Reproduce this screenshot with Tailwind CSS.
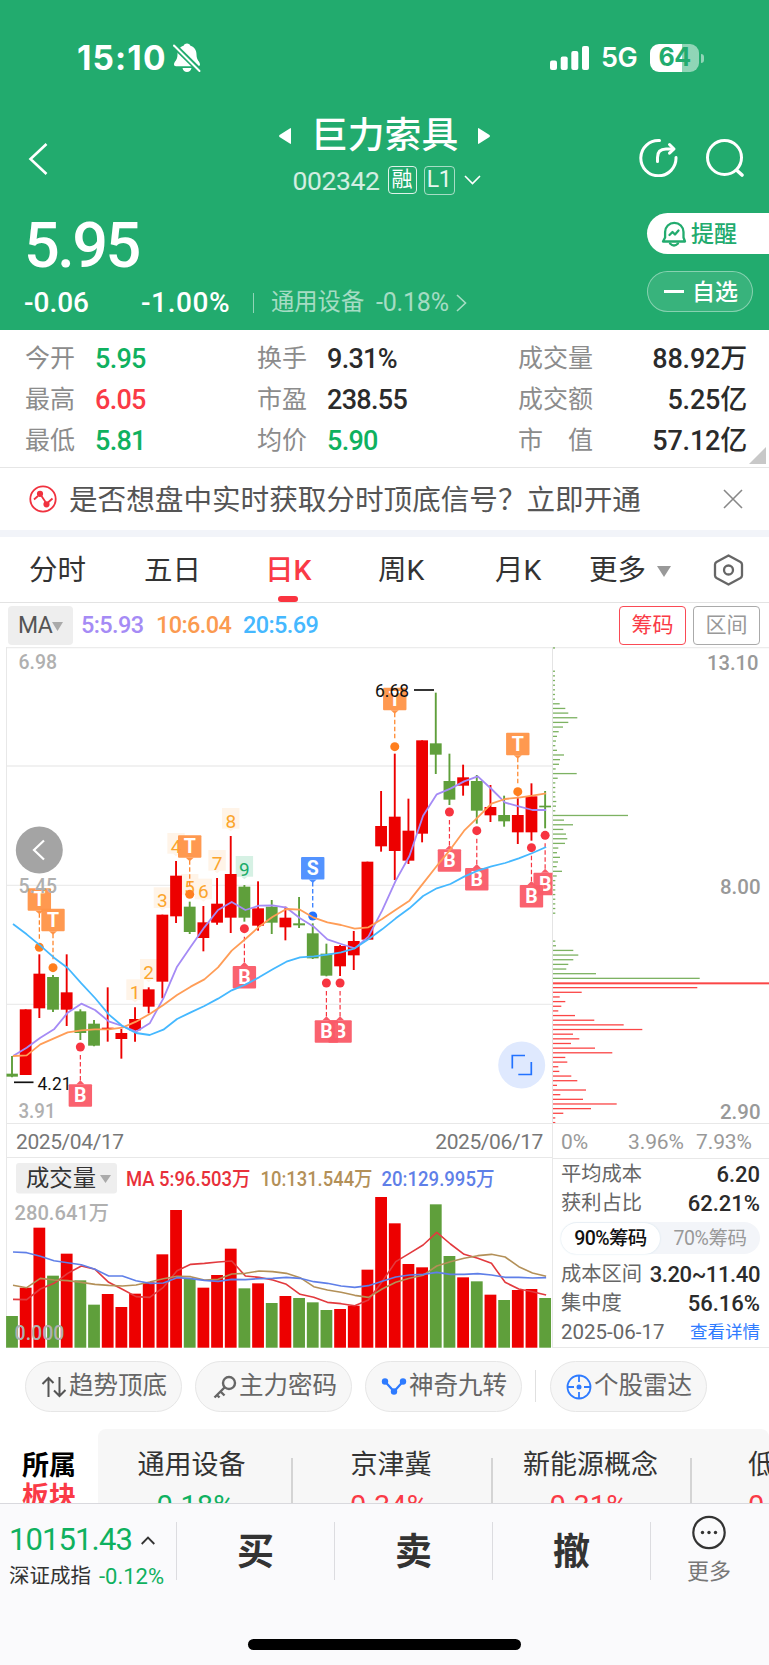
<!DOCTYPE html>
<html lang="zh-CN">
  <head>
    <meta charset="UTF-8" />
    <meta name="viewport" content="width=device-width, initial-scale=1.0" />
    <title>巨力索具 002342</title>
    <script src="https://cdn.jsdelivr.net/npm/@tailwindcss/browser@4"></script>
  </head>
  <body class="bg-white font-['Roboto','Noto_Sans_CJK_SC',sans-serif] text-[#333]">
    <div class="flex h-[1665px] w-[769px] flex-col overflow-hidden whitespace-nowrap">
      <!-- Header -->
      <header class="h-[330px] shrink-0 bg-[#22ab6e] text-white">
        <div class="flex h-[114px] items-center pl-[77px] pr-[65px] pt-0.5 font-['Inter',sans-serif]">
          <span class="w-[91px] text-[33.500px] font-bold tracking-[1.100px]">15:10</span>
          <svg class="ml-1" width="30" height="32" viewBox="0 0 30 32" fill="#fff">
            <path d="M15 1.500c-1.800 0-3 1-3.400 2.200C7.500 5 5.500 8.300 5.500 12.500c0 6-3.500 7-3.500 10 0 1 .8 1.700 2 1.700h22c1.200 0 2-.7 2-1.700 0-3-3.500-4-3.500-10 0-4.200-2-7.500-6.100-8.800C18 2.500 16.800 1.500 15 1.500zM10.500 26h9c-.5 2.500-2.300 4-4.500 4s-4-1.500-4.500-4z" />
            <path d="M1.500 3l26.500 26" stroke="#22ab6e" stroke-width="5.500" />
            <path d="M2 3.500l25.500 25.500" stroke="#fff" stroke-width="2" stroke-linecap="round" />
          </svg>
          <svg class="ml-auto" width="39" height="26" viewBox="0 0 39 26" fill="#fff">
            <rect x="0" y="15.500" width="7" height="9.500" rx="2" />
            <rect x="10.700" y="11.500" width="7" height="13.500" rx="2" />
            <rect x="21.300" y="6" width="7" height="19" rx="2" />
            <rect x="32" y="1" width="7" height="24" rx="2" />
          </svg>
          <span class="ml-[12px] w-[38px] text-[27px] font-semibold tracking-[-0.6px]">5G</span>
          <div class="ml-[11px] flex h-[28px] w-[49px] items-center justify-center rounded-[9px] bg-linear-to-r from-white from-65% to-white/50 to-65% text-[25px] font-bold tracking-[-0.5px] text-[#22ab6e]">64</div>
          <div class="ml-[2px] h-[9px] w-[3px] rounded-r-full bg-white/50"></div>
        </div>

        <div class="grid h-[92px] grid-cols-[1fr_auto_1fr]">
          <div class="pl-[27px] pt-[28px]">
            <svg width="22" height="34" viewBox="0 0 22 34" fill="none" stroke="#fff" stroke-width="2.600"><path d="M19.500 2L3.500 17l16 15" /></svg>
          </div>
          <div class="flex flex-col items-center pt-px">
            <div class="flex h-[42px] items-center gap-[19px]">
              <svg width="14" height="18" viewBox="0 0 14 18" fill="#fff"><path d="M13 2v14q0 1.500-1.200.600L1.500 10q-1-1 0-2L11.800 1.400Q13 .5 13 2z" /></svg>
              <h1 class="w-[147px] text-[36.800px] font-medium leading-[42px]">巨力索具</h1>
              <svg width="14" height="18" viewBox="0 0 14 18" fill="#fff"><path d="M1 2v14q0 1.500 1.200.600L12.500 10q1-1 0-2L2.200 1.400Q1 .5 1 2z" /></svg>
            </div>
            <div class="mt-[7px] flex h-[32px] items-center pl-[4px]">
              <span class="w-[95px] pt-0.5 text-[26.500px] tracking-[-0.4px] text-white/80">002342</span>
              <span class="flex h-[28px] w-[29px] items-center justify-center rounded-[4px] border border-white/85 text-[21px]">融</span>
              <span class="ml-[7px] flex h-[29px] w-[31px] items-center justify-center rounded-[4px] border border-white/60 text-[23px] tracking-[-0.5px] text-white/90">L1</span>
              <svg class="ml-[9px]" width="17" height="10" viewBox="0 0 17 10" fill="none" stroke="#fff" stroke-width="1.600"><path d="M1 1l7.500 7.500L16 1" /></svg>
            </div>
          </div>
          <div class="flex items-start justify-end gap-[27px] pr-[24px] pt-[23px]">
            <svg width="40" height="40" viewBox="0 0 40 40" fill="none" stroke="#fff" stroke-width="3" stroke-linecap="round" stroke-linejoin="round">
              <path d="M21.500 3.600A17.600 17.600 0 1 0 38 20.500" />
              <path d="M19.500 24.500v-4q0-8.500 8.500-8.500h7" />
              <path d="M31.500 7.500l4.500 4.500-4.500 4.200" />
            </svg>
            <svg width="40" height="40" viewBox="0 0 40 40" fill="none" stroke="#fff" stroke-width="3" stroke-linecap="round">
              <circle cx="19.500" cy="20.500" r="17" />
              <path d="M32 33.500l5 4.500" stroke-width="3.600" />
            </svg>
          </div>
        </div>

        <div class="flex h-[124px] justify-between">
          <div class="pl-[24px]">
            <div class="h-[74px] pt-[7px] text-[63px] font-medium leading-[66px] tracking-[-2.500px]">5.95</div>
            <div class="flex h-[40px] items-center pt-[5px] text-[28px] font-medium">
              <span class="w-[117px]">-0.06</span>
              <span class="w-[112px] tracking-[0.6px]">-1.00%</span>
              <span class="h-[20px] w-px bg-white/50"></span>
              <span class="ml-[17px] w-[105px] text-[23.300px] font-normal text-white/60">通用设备</span>
              <span class="w-[80px] text-[25px] font-normal tracking-[-0.2px] text-white/60">-0.18%</span>
              <svg width="11" height="18" viewBox="0 0 11 18" fill="none" stroke="#fff" stroke-opacity=".6" stroke-width="1.600"><path d="M1 1l8.500 8L1 17" /></svg>
            </div>
          </div>
          <div class="flex flex-col gap-[17px] pt-[7px] text-[23px]">
            <div class="flex h-[41px] w-[122px] items-center rounded-l-full bg-white pl-[14px] font-medium text-[#22ab6e]">
              <svg width="26" height="28" viewBox="0 0 26 28" fill="none" stroke="#22ab6e" stroke-width="2.300" stroke-linejoin="round" stroke-linecap="round">
                <path d="M2 21.500h22l-1.500-4V12a9.200 9.200 0 0 0-18.400 0v5.500z" />
                <path d="M8.500 15l3-3 2.500 2.500 3.500-4" />
                <path d="M9 23.500q4 4 8 0" />
              </svg>
              <span class="ml-[4px] pt-[3px]">提醒</span>
            </div>
            <div class="flex h-[41px] w-[106px] items-center rounded-full border border-white/40 bg-white/10 pl-[16px] font-medium">
              <span class="h-[2.500px] w-[20px] bg-white"></span>
              <span class="ml-[8px] pt-[3px]">自选</span>
            </div>
          </div>
        </div>
      </header>

      <!-- Quote summary -->
      <section class="relative h-[138px] shrink-0 border-b border-[#e6e6e6] pt-[8px] text-[27px] font-medium tracking-[-0.7px] text-[#2b2b2b]">
        <div class="grid h-[123px] grid-cols-[70px_162px_70px_191px_1fr] grid-rows-3 items-center pl-[25px] pr-[22px] [&>b]:text-[25px] [&>b]:font-normal [&>b]:tracking-normal [&>b]:text-[#8c8c8c] [&>span]:pt-0.5">
          <b>今开</b><span class="text-[#0fb15f]">5.95</span>
          <b>换手</b><span>9.31%</span>
          <div class="flex items-center justify-between"><span class="text-[25px] font-normal tracking-normal text-[#8c8c8c]">成交量</span><span class="pt-0.5 tracking-[-0.2px]">88.92万</span></div>
          <b>最高</b><span class="text-[#fa3a46]">6.05</span>
          <b>市盈</b><span>238.55</span>
          <div class="flex items-center justify-between"><span class="text-[25px] font-normal tracking-normal text-[#8c8c8c]">成交额</span><span class="pt-0.5 tracking-[-0.2px]">5.25亿</span></div>
          <b>最低</b><span class="text-[#0fb15f]">5.81</span>
          <b>均价</b><span class="text-[#0fb15f]">5.90</span>
          <div class="flex items-center justify-between"><span class="flex w-[75px] justify-between text-[25px] font-normal tracking-normal text-[#8c8c8c]"><i class="not-italic">市</i><i class="not-italic">值</i></span><span class="pt-0.5 tracking-[-0.2px]">57.12亿</span></div>
        </div>
        <svg class="absolute bottom-[3px] right-[3px]" width="17" height="17" fill="#c8c8c8"><path d="M17 0v17H0z" /></svg>
      </section>

      <!-- Notice -->
      <section class="flex h-[62px] shrink-0 items-center pl-[28px] pr-[26px] text-[#555]">
        <svg width="30" height="30" viewBox="0 0 30 30" fill="none" stroke="#f0323f" stroke-width="1.800">
          <circle cx="15" cy="15" r="12.700" />
          <path d="M6 15.500l4-3.500M13.500 12l4 6M20 18.500l4.500-4" />
          <circle cx="12" cy="9.800" r="2.200" fill="#f0323f" />
          <circle cx="18.500" cy="20.300" r="2.200" fill="#f0323f" />
        </svg>
        <span class="ml-[11px] pt-[3px] text-[28.600px]">是否想盘中实时获取分时顶底信号？立即开通</span>
        <svg class="ml-auto" width="20" height="20" viewBox="0 0 20 20" stroke="#888" stroke-width="1.600"><path d="M1 1l18 18M19 1L1 19" /></svg>
      </section>
      <div class="h-[7px] shrink-0 bg-[#f2f4f9]"></div>

      <!-- Period tabs -->
      <nav class="grid h-[66px] shrink-0 grid-cols-[115px_121px_113px_117px_94px_124px_1fr] items-center border-b border-[#e3e3e3] pl-[29px] text-[28.500px] [&>span]:pt-[4px]">
        <span>分时</span>
        <span>五日</span>
        <span class="relative flex h-full items-center font-medium text-[#fa3a46]">日K<i class="absolute bottom-0 left-[13px] h-[6px] w-[20px] rounded-[3px] bg-[#fa3440]"></i></span>
        <span>周K</span>
        <span>月K</span>
        <span class="flex items-center">更多<svg class="ml-[11px]" width="14" height="11" fill="#999"><path d="M0 0h14l-7 11z" /></svg></span>
        <svg width="31" height="34" viewBox="0 0 31 34" fill="none" stroke="#666" stroke-width="2.300" stroke-linejoin="round">
          <path d="M15.500 2.500l12 6.500q1.500 1 1.500 2.500v11q0 1.500-1.500 2.500l-12 6.500-12-6.500Q2 24 2 22.500v-11Q2 10 3.500 9z" />
          <circle cx="15.500" cy="17" r="4.500" />
        </svg>
      </nav>

      <!-- Moving averages -->
      <section class="flex h-[44px] shrink-0 items-center pl-[8px] pr-[9px] text-[23.500px] font-medium tracking-[-0.6px]">
        <span class="flex h-[39px] w-[65px] items-center justify-center rounded-[4px] bg-[#eee] pt-0.5 text-[23px] font-normal text-[#555]">MA<svg width="11" height="9" fill="#aaa"><path d="M0 0h11L5.500 9z" /></svg></span>
        <span class="ml-[8px] w-[75px] pt-0.5 text-[#a58bf5]">5:5.93</span>
        <span class="w-[87px] pt-0.5 text-[#fb9a50]">10:6.04</span>
        <span class="pt-0.5 text-[#45b8ff]">20:5.69</span>
        <span class="ml-auto flex h-[39px] w-[67px] items-center justify-center rounded-[4px] border border-[#fa4a55] pt-px text-[21px] font-normal tracking-normal text-[#fa3a46]">筹码</span>
        <span class="ml-[7px] flex h-[39px] w-[67px] items-center justify-center rounded-[4px] border border-[#aaa] pt-px text-[21px] font-normal tracking-normal text-[#999]">区间</span>
      </section>

      <!-- Candles and chip distribution -->
      <svg id="price" class="block h-[476px] w-[769px] shrink-0" viewBox="0 647 769 476" font-size="20.500"></svg>

      <div class="flex h-[225px] shrink-0">
        <div class="w-[553px] border-r border-[#e8e8e8]">
          <div class="ml-[6px] flex h-[35px] items-center justify-between border-y border-l border-[#e8e8e8] pl-[9px] pr-[9px] pt-[5px] text-[21px] tracking-[-0.4px] text-[#777]">
            <span>2025/04/17</span><span>2025/06/17</span>
          </div>
          <svg id="volume" class="block h-[190px] w-[552px]" viewBox="0 1158 552 190" font-size="20"></svg>
        </div>

        <!-- Chip stats -->
        <div class="w-[216px] border-b border-[#e8e8e8] text-[#666]">
          <div class="flex h-[36px] items-center border-y border-[#e8e8e8] pl-[8px] pt-1 text-[21px] tracking-[-0.1px] text-[#999]">
            <span class="w-[67px]">0%</span><span class="w-[68px]">3.96%</span><span>7.93%</span>
          </div>
          <div class="flex flex-col pl-[8px] pr-[9px] text-[20.300px] [&_b]:text-[22px] [&_b]:font-medium [&_b]:text-[#2b2b2b]">
            <div class="flex h-[29px] items-center justify-between pt-0.5"><span>平均成本</span><b>6.20</b></div>
            <div class="flex h-[29px] items-center justify-between pt-0.5"><span>获利占比</span><b>62.21%</b></div>
            <div class="my-[5px] flex h-[32px] items-center rounded-full bg-[#f3f5f9] text-[19.500px]">
              <span class="flex h-[31px] w-[99px] items-center justify-center rounded-full bg-white pt-0.5 font-medium tracking-[-0.6px] text-[#111] shadow-[0_0_2px_#cfe0ea]">90%筹码</span>
              <span class="flex-1 pt-0.5 text-center tracking-[-0.4px] text-[#999]">70%筹码</span>
            </div>
            <div class="flex h-[29px] items-center justify-between pt-px"><span>成本区间</span><b class="tracking-[-0.4px]">3.20~11.40</b></div>
            <div class="flex h-[29px] items-center justify-between pt-px"><span>集中度</span><b>56.16%</b></div>
            <div class="flex h-[30px] items-center justify-between"><span class="text-[20.500px]">2025-06-17</span><span class="text-[17.500px] text-[#2e7bff]">查看详情</span></div>
          </div>
        </div>
      </div>

      <!-- Tools -->
      <section class="flex h-[81px] shrink-0 items-start pl-[25px] pt-[13px] text-[24.500px] text-[#666] [&>div]:flex [&>div]:h-[51px] [&>div]:w-[157px] [&>div]:items-center [&>div]:rounded-full [&>div]:border [&>div]:border-[#e6e6e6] [&>div]:bg-[#f7f7f7]">
        <div class="pl-[15px]">
          <svg class="mr-[2px]" width="26" height="24" viewBox="0 0 26 24" fill="none" stroke="#555" stroke-width="2"><path d="M7.500 22V3M1.500 9l6-6 5 5M18.500 2v19M13 15.500l5.500 5.500 6-6" /></svg>趋势顶底
        </div>
        <div class="ml-[13px] pl-[17px]">
          <svg class="mr-[2px]" width="24" height="24" viewBox="0 0 24 24" fill="none" stroke="#666" stroke-width="2.400"><circle cx="16" cy="8" r="6" /><path d="M11.500 12.500L1.500 22.500M7.500 16.500l4 4M3.500 19.500l3 3" /></svg>主力密码
        </div>
        <div class="ml-[13px] pl-[15px]">
          <svg class="mr-[2px]" width="26" height="24" viewBox="0 0 26 24" fill="#2e7bff"><path d="M4 6.500l9 10 9-10" fill="none" stroke="#2e7bff" stroke-width="2.200" /><circle cx="4" cy="6.500" r="3.200" /><circle cx="22" cy="6.500" r="3.200" /><circle cx="13" cy="16.500" r="3.200" /></svg>神奇九转
        </div>
        <span class="ml-[13px] mr-[14px] mt-[9px] h-[32px] w-px bg-[#e0e0e0]"></span>
        <div class="pl-[15px]">
          <svg class="mr-[2px]" width="26" height="26" viewBox="0 0 26 26" fill="none" stroke="#2e7bff" stroke-width="1.800"><circle cx="13" cy="13" r="11.500" /><path d="M13 2v6M13 18v6M2 13h6M18 13h6" /><circle cx="13" cy="13" r="2.500" fill="#2e7bff" stroke="none" /></svg>个股雷达
        </div>
      </section>

      <!-- Sectors -->
      <section class="flex h-[74px] shrink-0 overflow-hidden">
        <div class="w-[98px] shrink-0 pl-[22px] pt-[22px] text-[27px] font-bold leading-[31px] text-black">所属<br /><span class="text-[#fa3a46]">板块</span></div>
        <div class="flex h-[110px] w-[671px] shrink-0 overflow-hidden rounded-[8px] bg-[#f7f7f7] pt-[16px] text-center text-[27px] [&_p]:mt-px [&_p]:text-[29px] [&_p]:leading-[40px] [&_p]:text-[#fa3a46]">
          <div class="w-[193px] shrink-0 pr-[6px] leading-[40px]">通用设备<p class="text-[#0fb15f]!">-0.18%</p></div>
          <div class="mt-[13px] w-[2px] shrink-0 bg-[#d4d4d4]"></div>
          <div class="w-[198px] shrink-0 pr-[2px] leading-[40px]">京津冀<p class="-ml-[4px]">0.34%</p></div>
          <div class="mt-[13px] w-[2px] shrink-0 bg-[#d4d4d4]"></div>
          <div class="w-[197px] shrink-0 pr-[2px] leading-[40px]">新能源概念<p class="-ml-[4px]">0.31%</p></div>
          <div class="mt-[13px] w-[2px] shrink-0 bg-[#d4d4d4]"></div>
          <div class="w-[198px] shrink-0 pl-[56px] text-left leading-[40px]">低空经济<p>0.25%</p></div>
        </div>
      </section>

      <!-- Trade bar -->
      <footer class="flex h-[162px] shrink-0 flex-col border-t border-[#d9d9de] bg-[#fafafc]">
        <div class="flex h-[96px] [&>i]:mt-[18px] [&>i]:h-[58px] [&>i]:w-px [&>i]:bg-[#dcdce0]">
          <div class="w-[176px] pl-[9px] pt-[16px]">
            <div class="flex h-[40px] items-center pt-px text-[31px] tracking-[-0.9px] text-[#0fb15f]">10151.43<svg class="ml-[9px]" width="14" height="9" viewBox="0 0 14 9" fill="none" stroke="#333" stroke-width="1.800"><path d="M.7 8L7 1.500 13.300 8" /></svg></div>
            <div class="flex h-[32px] items-center text-[20.500px] text-[#333]">深证成指<span class="ml-[8px] text-[22px] text-[#0fb15f]">-0.12%</span></div>
          </div>
          <i></i>
          <div class="w-[157px] text-center text-[37px] font-bold leading-[97px]">买</div>
          <i></i>
          <div class="w-[157px] text-center text-[37px] font-bold leading-[97px]">卖</div>
          <i></i>
          <div class="w-[157px] text-center text-[37px] font-bold leading-[97px]">撤</div>
          <i></i>
          <div class="flex flex-1 flex-col items-center pr-[2px] pt-[11px] text-[22px] text-[#777]">
            <svg width="36" height="36" viewBox="0 0 36 36" fill="none" stroke="#333" stroke-width="2.200"><circle cx="18" cy="17.500" r="15.700" /><g fill="#333" stroke="none"><circle cx="11.500" cy="17.500" r="1.700" /><circle cx="18" cy="17.500" r="1.700" /><circle cx="24.500" cy="17.500" r="1.700" /></g></svg>
            <span class="mt-[4px]">更多</span>
          </div>
        </div>
        <div class="mx-auto mt-[39px] h-[11px] w-[273px] rounded-full bg-black"></div>
      </footer>
    </div>

    <script>
      const RED = "#ed0000";
      const GREEN = "#5f9f3b";
      const STEP = 13.67;
      const cx = (i) => 12 + i * STEP;

      // values are stored at @3x, offset from the top of each chart
      const py = (v) => 640 + v / 3;
      const vy = (v) => 1110 + v / 3;

      const rect = (x, y, w, h, fill, extra = "") => `<rect x="${x}" y="${y}" width="${w}" height="${h}" fill="${fill}" ${extra}/>`;
      const line = (x1, y1, x2, y2, stroke, w = 1, extra = "") =>
        `<line x1="${x1}" y1="${y1}" x2="${x2}" y2="${y2}" stroke="${stroke}" stroke-width="${w}" ${extra}/>`;
      const text = (x, y, w, str, fill, extra = "") =>
        `<text x="${x}" y="${y}" textLength="${w}" lengthAdjust="spacingAndGlyphs" fill="${fill}" ${extra}>${str}</text>`;
      const poly = (vals, fy, color, w) =>
        `<polyline fill="none" stroke="${color}" stroke-width="${w}" stroke-linejoin="round" points="${vals.map((v, i) => `${cx(i) + 1},${fy(v)}`).join(" ")}"/>`;

      // colour, high, body top, body bottom, low
      const candles = [
        "g 1248 1301 1310 1312", "r 1108 1108 1305 1305", "r 943 1001 1105 1134", "g 1005 1011 1109 1116",
        "r 943 1057 1109 1158", "g 1108 1114 1179 1200", "g 1140 1151 1217 1219", "r 1042 1163 1167 1205",
        "r 1167 1179 1197 1256", "r 1102 1137 1171 1205", "r 1042 1048 1100 1120", "r 824 824 1025 1075",
        "r 663 707 829 849", "g 785 800 876 882", "r 798 847 894 934", "r 714 791 848 854",
        "r 588 702 833 879", "g 735 740 833 845", "r 724 805 857 872", "g 780 800 848 882",
        "r 800 833 862 901", "g 771 850 856 864", "g 850 880 955 957", "g 911 941 1007 1009",
        "r 915 918 979 1008", "r 873 903 946 990", "r 665 665 899 899", "r 453 558 619 635",
        "r 341 530 633 720", "r 476 572 662 672", "r 301 301 581 607", "g 158 310 344 402",
        "g 341 423 479 495", "r 374 412 437 467", "g 405 423 512 551", "r 435 501 526 546",
        "g 467 525 544 560", "r 470 525 577 612", "r 430 469 577 602", "g 453 497 502 565",
      ].map((s) => s.split(" ").map((v, i) => (i ? +v : v)));

      const ma5 = [1248, 1223, 1193, 1168, 1118, 1091, 1110, 1144, 1158, 1175, 1150, 1075, 980, 920, 862, 810, 786, 810, 797, 796, 803, 835, 860, 898, 912, 925, 890, 812, 722, 648, 527, 463, 446, 424, 409, 447, 488, 499, 510, 510];
      const ma10 = [1248, 1246, 1213, 1195, 1177, 1171, 1168, 1168, 1163, 1145, 1122, 1095, 1065, 1040, 1018, 982, 932, 897, 860, 830, 807, 809, 833, 847, 855, 866, 862, 837, 809, 782, 730, 678, 628, 572, 532, 491, 477, 473, 467, 460];
      const ma20 = [852, 883, 917, 953, 984, 1030, 1074, 1123, 1158, 1179, 1185, 1169, 1137, 1117, 1098, 1076, 1051, 1034, 1012, 988, 965, 952, 949, 944, 937, 925, 898, 868, 835, 805, 768, 745, 732, 710, 692, 679, 669, 655, 639, 621];

      // candle index, letter, dot position
      const marks = [
        [2, "T", 922], [3, "T", 983], [13, "T", 763], [28, "T", 320], [37, "T", 455], [22, "S", 828],
        [5, "B", 1221], [17, "B", 866], [24, "B", 1029], [23, "B", 1029], [32, "B", 516], [34, "B", 572],
        [39, "B", 586], [38, "B", 623],
      ];
      const markColor = { T: ["#ff9447", "#ff7f1e"], S: ["#4a8dff", "#2272ff"], B: ["#fa5a67", "#f73440"] };

      // candle index, digit, top of its label
      const counts = [[9, 1, 1018], [10, 2, 957], [11, 3, 742], [12, 4, 579], [13, 5, 702], [14, 6, 716], [15, 7, 630], [16, 8, 504], [17, 9, 648]];

      const chips = {
        0: [2],
        5: [2, 2, 2, 2, 2, 2, 2, 6.7, 12.3, 15.3, 24.3, 15.3, 10, 5.7, 4, 3, 2.3, 4, 11, 7, 6, 2.7, 23.7, 4.7, 2.3, 2.3, 2.3, 2.3, 3.3, 3, 2.3, 75, 11, 20, 10.3, 13, 14.3, 12, 5.3, 4, 7, 5, 3.7, 9, 3.7, 2.3, 2.3, 2.3, 2.3, 2.3, 2.3, 2.3, 2.3],
        63: [2.3, 3, 20.3, 25.3, 20.3, 15.3, 13.3, 43, 146.7, 216, 144.3, 28.7, 6.7, 12.3, 8.3, 5.3, 22, 41.3, 70.7, 89.3, 20, 26.3, 18, 42, 59.3, 12.3, 14.3, 5.3, 6.3, 18.3, 24.3, 4, 33, 7.3, 30, 63.7, 38, 10.3, 2.3, 2.3],
      };

      let s = "";
      [647.5, 766, 885.3, 1004.3].forEach((y) => (s += line(6, y, y === 647.5 ? 769 : 552, y, "#ececec", 1.3)));
      s += line(6.5, 647, 6.5, 1123, "#e8e8e8") + line(552.5, 647, 552.5, 1123, "#e4e4e4");

      counts.forEach(([i, n, top]) => {
        const [bg, fg] = n === 9 ? ["#d6f1e4", "#1aab68"] : ["#fff4e8", "#fba52c"];
        const x = cx(i), y = py(top);
        s += rect(x - 8.7, y, 17.4, 20.7, bg) + `<path d="M${x - 3} ${y + 20.7}h6l-3 2.500z" fill="${bg}"/>`;
        s += `<text x="${x}" y="${y + 19.7}" text-anchor="middle" fill="${fg}" font-size="19">${n}</text>`;
      });

      candles.forEach(([c, hi, top, bot, lo], i) => {
        const fill = c === "r" ? RED : GREEN;
        const x = Math.max(6.5, cx(i) - 5.9);
        s += line(cx(i), py(hi), cx(i), py(lo), fill, 1.9);
        s += rect(x, py(top), cx(i) + 5.9 - x, (bot - top) / 3, fill);
      });

      s += '<clipPath id="plot"><rect x="6" y="647" width="546.500" height="476"/></clipPath><g clip-path="url(#plot)">';
      marks.forEach(([i, letter, dot]) => {
        const [bg, fg] = markColor[letter];
        const x = cx(i), y = py(dot), below = letter === "B";
        const top = below ? y + 37.3 : y - 59;
        s += line(x, below ? y + 8 : y - 34, x, below ? y + 34 : y - 7, fg, 1.2, 'stroke-dasharray="4.500 2.500"');
        s += `<circle cx="${x}" cy="${y}" r="4.500" fill="${fg}"/>`;
        s += rect(x - 11.7, top, 23.4, 22.5, bg, 'rx="1" fill-opacity=".95"');
        s += below ? `<path d="M${x - 4} ${top}l4-4 4 4z" fill="${bg}"/>` : `<path d="M${x - 4} ${top + 22.5}l4 3.500 4-3.500z" fill="${bg}"/>`;
        s += `<text x="${x}" y="${top + 18}" text-anchor="middle" fill="#fff" font-size="19.500" font-weight="700">${letter}</text>`;
      });
      s += "</g>";

      s += poly(ma5, py, "#a58bf5", 1.8) + poly(ma10, py, "#ff9d57", 1.8) + poly(ma20, py, "#45b8ff", 1.8);

      for (const [start, widths] of Object.entries(chips)) {
        widths.forEach((w, j) => {
          const k = +start + j;
          s += rect(553, py(24 + 13.96 * k) - 0.7, w, w === 216 ? 2 : 1.3, k >= 72 ? "#fb4646" : "#7db262");
        });
      }

      s += '<g font-weight="500">';
      s += text(18.5, 669, 38.5, "6.98", "#b0b0b0") + text(18.5, 893.3, 38.5, "5.45", "#b0b0b0") + text(18.5, 1118.3, 37, "3.91", "#b0b0b0");
      s += text(707, 669.7, 51.5, "13.10", "#999") + text(720, 894, 40.5, "8.00", "#999") + text(720, 1119, 40.5, "2.90", "#999");
      s += "</g>";
      s += line(14, 1082.3, 33.5, 1082.3, "#111", 1.7) + text(37.5, 1090, 34, "4.21", "#111", 'font-size="18.500"');
      s += line(414, 690, 434, 690, "#111", 1.7) + text(375, 697.3, 34, "6.68", "#111", 'font-size="18.500"');

      s += '<circle cx="39.300" cy="850" r="23.500" fill="#a4a4a4"/><path d="M44 840.500l-10 9.500 10 9.500" fill="none" stroke="#fff" stroke-width="2.200"/>';
      s += '<circle cx="521.700" cy="1065" r="23.500" fill="#dfe9fe"/><path d="M525 1055.500h-12.700v13M531.300 1062v12.500h-13" fill="none" stroke="#2272ff" stroke-width="1.700"/>';
      document.getElementById("price").innerHTML = s;

      const volumes = [618, 533, 353, 497, 431, 511, 584, 552, 591, 551, 517, 433, 300, 507, 533, 495, 416, 535, 520, 579, 558, 564, 577, 600, 597, 587, 479, 261, 340, 462, 472, 283, 438, 502, 514, 554, 570, 540, 537, 564];
      const vma5 = [568, 569, 537, 520, 490, 468, 478, 517, 538, 560, 562, 532, 482, 463, 460, 456, 453, 498, 502, 510, 523, 553, 562, 577, 581, 587, 570, 515, 455, 430, 405, 367, 402, 433, 445, 460, 517, 537, 545, 555];
      const vma10 = [526, 533, 505, 510, 512, 517, 523, 526, 528, 525, 516, 506, 499, 500, 510, 508, 492, 490, 483, 485, 490, 503, 530, 540, 547, 556, 562, 537, 517, 505, 496, 468, 455, 445, 437, 433, 441, 470, 489, 499];
      const vma20 = [426, 428, 439, 452, 458, 464, 478, 498, 498, 512, 520, 519, 503, 506, 511, 514, 508, 509, 506, 505, 502, 505, 515, 520, 528, 532, 527, 514, 501, 495, 493, 487, 493, 493, 491, 495, 502, 502, 504, 503];

      let v = line(6.5, 1158, 6.5, 1348, "#e8e8e8");
      volumes.forEach((t, i) => {
        const x = Math.max(6, cx(i) - 5.9);
        v += rect(x, vy(t), cx(i) + 5.9 - x, 1347.7 - vy(t), candles[i][0] === "r" ? RED : GREEN);
      });
      v += poly(vma5, vy, "#e23a3e", 1.6) + poly(vma10, vy, "#b39058", 1.6) + poly(vma20, vy, "#5f7fe8", 1.6);
      v += rect(16, 1163, 101, 30.5, "#eee", 'rx="3"') + text(26, 1186, 70, "成交量", "#333", 'font-size="23"');
      v += '<path d="M100 1175h11l-5.500 8z" fill="#aaa"/>';
      v += '<g font-weight="500">';
      v += text(126, 1186.3, 124.5, "MA 5:96.503万", "#e8303a") + text(260.5, 1186.3, 112, "10:131.544万", "#b39058") + text(381.5, 1186.3, 113, "20:129.995万", "#5f7fe8");
      v += text(14.5, 1220, 94.5, "280.641万", "#b0b0b0") + text(14.5, 1340, 50, "0.000", "#b0b0b0");
      v += "</g>";
      document.getElementById("volume").innerHTML = v;
    </script>
  </body>
</html>
